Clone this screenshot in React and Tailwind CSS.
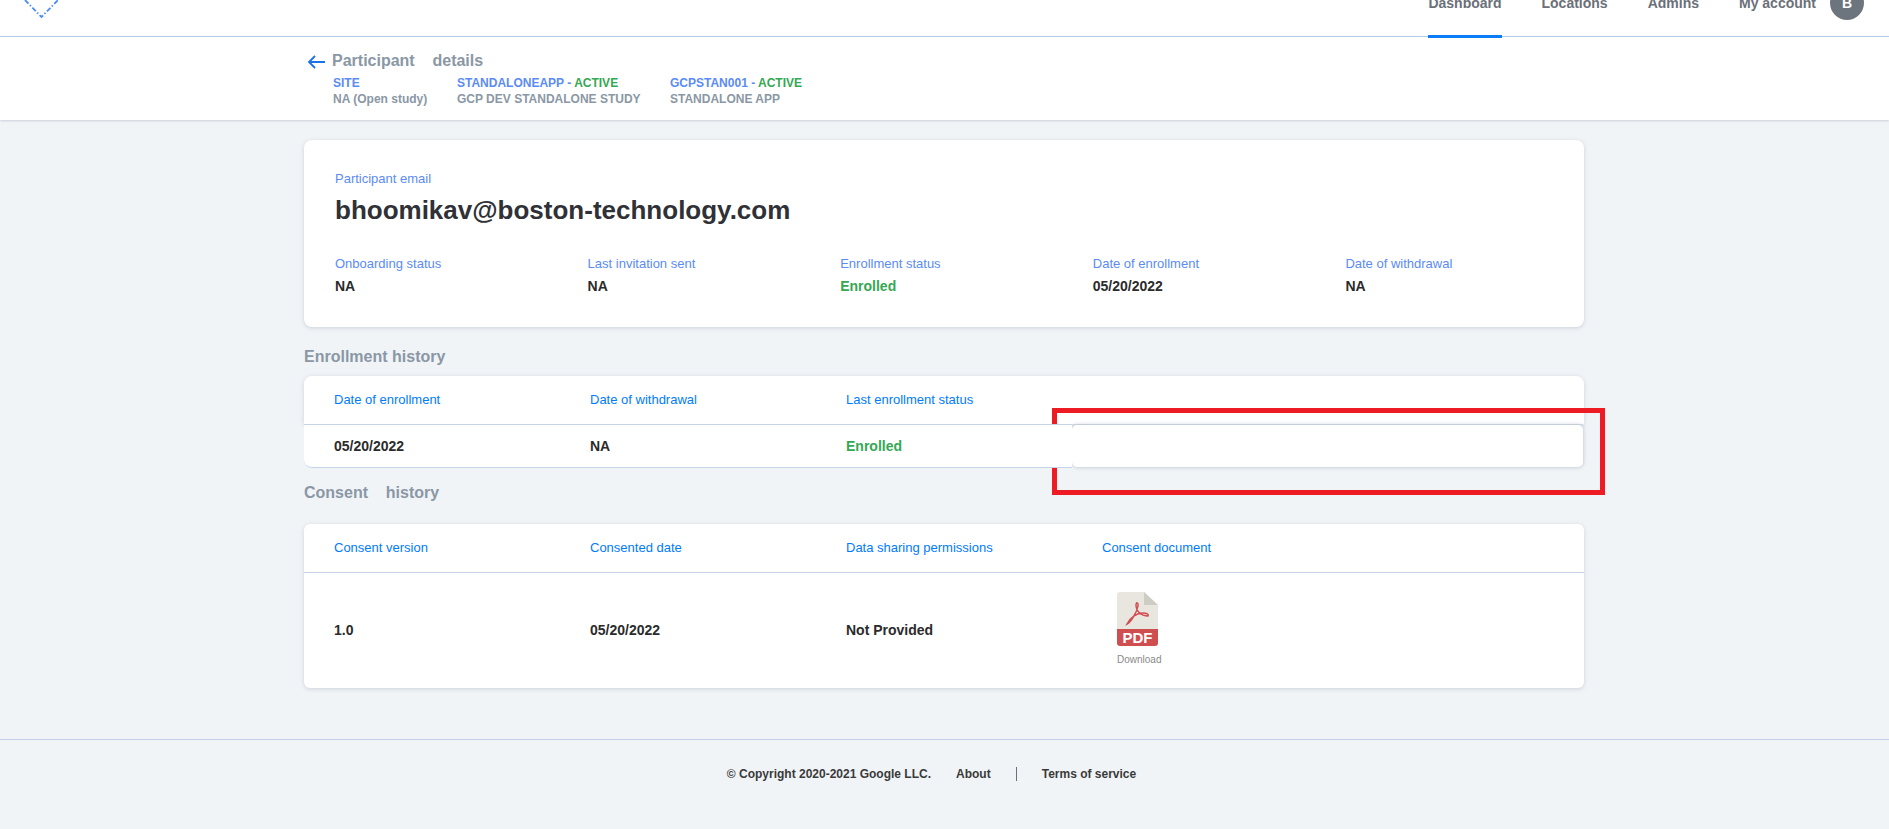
const F = "font-['Liberation_Sans',Arial,sans-serif]";

function Meta({ title, status, sub, className }) {
  return (
    <div className={className}>
      <div className="h-[16px] leading-[16px] text-[12px] font-bold text-[#5b8bf5] whitespace-pre">
        {title}
        {status && <span className="text-[#34a853]">{status}</span>}
      </div>
      <div className="h-[16px] leading-[16px] text-[12px] font-bold text-[#8a97a5]">{sub}</div>
    </div>
  );
}

function Stat({ label, value, green }) {
  return (
    <div className="w-[252.6px] shrink-0">
      <div className="text-[13px] leading-[16px] text-[#5b8bf5]">{label}</div>
      <div className={`mt-[6px] text-[14px] leading-[16px] font-bold ${green ? "text-[#34a853]" : "text-[#2b2b2b]"}`}>{value}</div>
    </div>
  );
}

function Head({ children }) {
  return <div className="w-[256px] shrink-0 text-[13px] leading-[16px] text-[#007bff]">{children}</div>;
}
function Cell({ children, green }) {
  return <div className={`w-[256px] shrink-0 text-[14px] leading-[16px] font-bold ${green ? "text-[#34a853]" : "text-[#2b2b2b]"}`}>{children}</div>;
}

function PdfIcon() {
  return (
    <svg width="41" height="54" viewBox="0 0 41 54" className="block">
      <path d="M3 0H27L41 13V38H0V3A3 3 0 0 1 3 0Z" fill="#e9e6df" />
      <path d="M27 0L41 13H27Z" fill="#cfccc4" />
      <path d="M0 37H41V51A3 3 0 0 1 38 54H3A3 3 0 0 1 0 51Z" fill="#cf4f50" />
      <path d="M10 32C14 30 20 20 21 14C21.5 10 19 10 19 13C19 19 24 24 31 24C32 22 29 21 26 21C20 21 14 25 10 32Z" fill="none" stroke="#cf4f50" strokeWidth="1.5" />
      <text x="20.5" y="50.5" textAnchor="middle" fill="#fff" fontSize="15" fontWeight="700" fontFamily="Liberation Sans, Arial, sans-serif">PDF</text>
    </svg>
  );
}

function NavItem({ children, active }) {
  return (
    <div className="relative h-full">
      <span className="text-[14px] leading-[16px] font-bold text-[#6b7079] block -mt-[5px]">{children}</span>
      {active && <div className="absolute left-0 right-0 top-[35px] h-[3px] bg-[#0a7cf5]" />}
    </div>
  );
}

export default function App() {
  return (
    <div className={`${F} relative h-[829px] overflow-hidden bg-[#f1f4f7]`}>
      <header className="h-[37px] bg-white border-b border-[#b8cce8] flex justify-between">
        <svg width="70" height="20" viewBox="0 0 70 20" className="shrink-0">
          <path d="M25 0L41.5 17L58 0" fill="none" stroke="#4a8cf7" strokeWidth="1.8" strokeDasharray="5 2 1.5 2" />
        </svg>
        <nav className="flex items-start mr-[25px] gap-[40px]">
          <NavItem active>Dashboard</NavItem>
          <NavItem>Locations</NavItem>
          <NavItem>Admins</NavItem>
          <div className="flex items-start gap-[14px]">
            <NavItem>My account</NavItem>
            <div className="-mt-[14px] w-[34px] h-[34px] rounded-full bg-[#6c757d] flex items-center justify-center text-white text-[14px] font-bold">B</div>
          </div>
        </nav>
      </header>

      <section className="h-[83px] bg-white shadow-[0_1px_2px_rgba(60,70,90,0.2)] pl-[307px] pt-[14px]">
        <div className="flex items-center h-[20px]">
          <svg width="18" height="14" viewBox="0 0 18 14" className="mr-[7px] mt-[2px]">
            <path d="M18 7H2M8 1L2 7L8 13" fill="none" stroke="#1a73e8" strokeWidth="1.8" />
          </svg>
          <span className="text-[16px] font-bold text-[#8a97a5] whitespace-pre">Participant    details</span>
        </div>
        <div className="flex mt-[4px] ml-[26px]">
          <Meta className="w-[124px]" title="SITE" sub="NA (Open study)" />
          <Meta className="w-[213px]" title="STANDALONEAPP - " status="ACTIVE" sub="GCP DEV STANDALONE STUDY" />
          <Meta title="GCPSTAN001 - " status="ACTIVE" sub="STANDALONE APP" />
        </div>
      </section>

      <main className="w-[1280px] ml-[304px]">
        <div className="mt-[20px] h-[187px] bg-white rounded-[8px] shadow-[0_1px_4px_rgba(90,110,140,0.25)] pl-[31px] pt-[31px]">
          <div className="text-[13px] leading-[16px] text-[#5b8bf5]">Participant email</div>
          <div className="mt-[7px] text-[26px] leading-[32px] font-bold text-[#2f3136]">bhoomikav@boston-technology.com</div>
          <div className="flex mt-[30px]">
            <Stat label="Onboarding status" value="NA" />
            <Stat label="Last invitation sent" value="NA" />
            <Stat label="Enrollment status" value="Enrolled" green />
            <Stat label="Date of enrollment" value="05/20/2022" />
            <Stat label="Date of withdrawal" value="NA" />
          </div>
        </div>

        <h2 className="mt-[20px] h-[20px] leading-[20px] text-[16px] font-bold text-[#8a97a5]">Enrollment history</h2>

        <div className="mt-[9px]">
          <div className="h-[48px] bg-white rounded-t-[8px] shadow-[0_1px_4px_rgba(90,110,140,0.25)] flex items-center pl-[30px]">
            <Head>Date of enrollment</Head>
            <Head>Date of withdrawal</Head>
            <Head>Last enrollment status</Head>
          </div>
          <div className="h-[44px] flex relative">
            <div className="w-[768px] relative z-10 bg-white rounded-bl-[8px] border-t border-b border-[#c5d4ea] flex items-center pl-[30px]">
              <Cell>05/20/2022</Cell>
              <Cell>NA</Cell>
              <Cell green>Enrolled</Cell>
            </div>
            <div className="w-[511px] mt-[1px] h-[42px] bg-white rounded-[5px] shadow-[0_0_4px_rgba(90,110,140,0.4)]" />
          </div>
        </div>

        <h2 className="mt-[15px] h-[20px] leading-[20px] text-[16px] font-bold text-[#8a97a5] whitespace-pre">Consent    history</h2>

        <div className="mt-[21px] h-[164px] bg-white rounded-[6px] shadow-[0_1px_4px_rgba(90,110,140,0.25)]">
          <div className="h-[49px] border-b border-[#c5d4ea] flex items-center pl-[30px]">
            <Head>Consent version</Head>
            <Head>Consented date</Head>
            <Head>Data sharing permissions</Head>
            <Head>Consent document</Head>
          </div>
          <div className="h-[115px] pb-[2px] flex items-center pl-[30px]">
            <Cell>1.0</Cell>
            <Cell>05/20/2022</Cell>
            <Cell>Not Provided</Cell>
            <div className="flex flex-col items-start pl-[15px] mb-[1px]">
              <PdfIcon />
              <span className="mt-[8px] text-[10px] leading-[12px] text-[#8a8a8a]">Download</span>
            </div>
          </div>
        </div>
      </main>

      <footer className="mt-[51px] border-t border-[#c5d0e6] pt-[26px] pr-[26px] flex justify-center items-center text-[12px] leading-[16px] font-bold text-[#3a3a3a]">
        <span>© Copyright 2020-2021 Google LLC.</span>
        <span className="ml-[25px]">About</span>
        <span className="ml-[25px] w-px h-[14px] bg-[#6b7079]" />
        <span className="ml-[25px]">Terms of service</span>
      </footer>

      <div className="absolute left-[1052px] top-[408px] w-[553px] h-[87px] border-[5px] border-[#ed1c24]" />
    </div>
  );
}
